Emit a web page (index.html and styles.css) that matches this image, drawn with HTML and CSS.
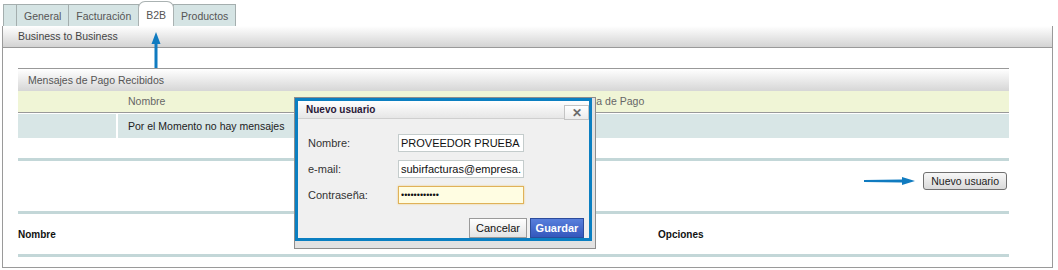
FILE: index.html
```html
<!DOCTYPE html>
<html lang="es">
  <head>
    <meta charset="UTF-8" />
    <meta name="viewport" content="width=device-width, initial-scale=1.0" />
    <title>B2B - Usuarios</title>
    <link rel="stylesheet" href="styles.css">
  </head>
  <body>
    <div class="page">
      <ul class="tabs">
        <li class="tab tab-stub"></li>
        <li class="tab">General</li>
        <li class="tab">Facturación</li>
        <li class="tab active">B2B</li>
        <li class="tab">Productos</li>
      </ul>

      <div class="frame">
        <div class="bar">Business to Business</div>

        <div class="content">
          <div class="section-title">Mensajes de Pago Recibidos</div>
          <div class="msg-head">
            <span></span>
            <span class="cell">Nombre</span>
            <span class="cell">Fecha de Pago</span>
          </div>
          <div class="msg-row">
            <span class="cell"></span>
            <span class="cell cell-wide">Por el Momento no hay mensajes</span>
          </div>

          <div class="rule"></div>
          <div class="actions">
            <button class="btn-native">Nuevo usuario</button>
          </div>
          <div class="rule"></div>
          <div class="list-head">
            <span>Nombre</span>
            <span>Opciones</span>
          </div>
          <div class="rule"></div>
        </div>
      </div>

      <!-- callout arrows -->
      <svg class="arrow arrow-up" width="12" height="40" viewBox="0 0 12 40">
        <path d="M6 2 L10.5 14 L7.5 14 L7.5 38 L4.5 38 L4.5 14 L1.5 14 Z" fill="#107bc0" />
      </svg>
      <svg class="arrow arrow-right" width="56" height="14" viewBox="0 0 56 14">
        <path d="M2 6 L40 5.5 L40 3 L53 7 L40 11 L40 8.5 L2 8 Z" fill="#107bc0" />
      </svg>

      <!-- modal -->
      <div class="dialog">
        <div class="dialog-box">
          <div class="dialog-title">
            Nuevo usuario
            <button class="dialog-close">&#x2715;</button>
          </div>
          <form class="dialog-form">
            <label for="nombre">Nombre:</label>
            <input id="nombre" type="text" value="PROVEEDOR PRUEBA">
            <label for="email">e-mail:</label>
            <input id="email" type="text" value="subirfacturas@empresa.com">
            <label for="clave">Contraseña:</label>
            <input id="clave" class="focused" type="password" value="123456789012">
          </form>
          <div class="dialog-actions">
            <button class="btn-cancel">Cancelar</button>
            <button class="btn-save">Guardar</button>
          </div>
        </div>
      </div>
    </div>
  </body>
</html>
```

FILE: styles.css
```css
body {
  margin: 0;
  font-family: "Liberation Sans", Arial, sans-serif;
  font-size: 10.5px;
  color: #444;
  background: #fff;
}

.page {
  position: relative;
  width: 1058px;
  height: 270px;
  overflow: hidden;
}

/* Tabs */
.tabs {
  display: flex;
  align-items: flex-end;
  height: 26px;
  margin: 0;
  padding: 0 0 0 3px;
  list-style: none;
}

.tab {
  height: 21px;
  line-height: 22px;
  padding: 0 7px;
  margin-right: -1px;
  border: 1px solid #a4aeae;
  border-bottom: 0;
  background-color: #d5e4e4;
  color: #555;
}

.tab-stub {
  width: 12px;
  padding: 0;
}

.tab.active {
  position: relative;
  z-index: 1;
  height: 24px;
  line-height: 27px;
  border-color: #aab2b2;
  border-radius: 7px 7px 0 0;
  background-color: #fff;
}

/* Main frame */
.frame {
  width: 1049px;
  margin-left: 2px;
  border: 1px solid #9a9a9a;
  border-top: 0;
}

.bar {
  height: 21px;
  line-height: 21px;
  padding-left: 15px;
  background-image: linear-gradient(#fff, #d3d3d3);
  border-bottom: 1px solid #999;
  color: #444;
}

.content {
  padding: 20px 43px 10px 15px;
}

.section-title {
  height: 22px;
  line-height: 22px;
  padding-left: 10px;
  border-top: 1px solid #999;
  background-image: linear-gradient(#fff, #d6d6d6);
  color: #555;
}

.msg-head,
.msg-row {
  display: grid;
  grid-template-columns: 98px 443px 1fr;
  column-gap: 2px;
}

.msg-head {
  height: 21px;
  line-height: 21px;
  background-color: #f0f5d6;
  border-bottom: 1px solid #999;
  color: #666;
}

.msg-row {
  height: 24px;
  line-height: 24px;
  margin-top: 1px;
  color: #222;
}

.cell {
  padding-left: 10px;
}

.msg-row .cell {
  background-color: #d8e6e6;
}

.cell-wide {
  grid-column: 2 / 4;
}

.rule {
  height: 3px;
  background-color: #c3d7d8;
}

.msg-row + .rule {
  margin-top: 20px;
}

.actions {
  display: flex;
  justify-content: flex-end;
  padding: 11px 2px 21px 0;
}

.btn-native {
  height: 18px;
  padding: 0 7px;
  font-family: inherit;
  font-size: 10.5px;
  color: #222;
  border: 1px solid #707070;
  border-radius: 3px;
  background-image: linear-gradient(#f7f7f7, #dadada);
}

.list-head {
  display: grid;
  grid-template-columns: 640px 1fr;
  align-items: center;
  height: 40px;
  font-size: 10px;
  font-weight: bold;
  color: #111;
}

/* Arrows */
.arrow {
  position: absolute;
}

.arrow-up {
  left: 150px;
  top: 30px;
}

.arrow-right {
  left: 862px;
  top: 174px;
}

/* Dialog */
.dialog {
  position: absolute;
  left: 294px;
  top: 97px;
  width: 300px;
  height: 150px;
  border: 1px solid #8d8d8d;
  background-color: #e2e2e2;
}

.dialog-box {
  width: 291px;
  border: 3px solid #0b7fc1;
  background-color: #f0f0f0;
}

.dialog-title {
  position: relative;
  height: 17px;
  line-height: 17px;
  padding-left: 8px;
  border-bottom: 1px solid #cfcfcf;
  background-image: linear-gradient(#fff, #e6e6e6);
  font-size: 10px;
  font-weight: bold;
  color: #2a1838;
}

.dialog-close {
  position: absolute;
  right: 0;
  top: 4px;
  width: 25px;
  height: 15px;
  padding: 0;
  line-height: 12px;
  font-size: 12px;
  font-weight: bold;
  color: #6a6a6a;
  border: 1px solid #c4c4c4;
  background-image: linear-gradient(#fff, #ececec);
}

.dialog-form {
  display: grid;
  grid-template-columns: 90px 126px;
  row-gap: 8px;
  align-items: center;
  margin: 0;
  padding: 15px 5px 0 10px;
  font-size: 11px;
  color: #333;
}

.dialog-form input {
  box-sizing: border-box;
  height: 18px;
  padding: 0 2px;
  font-family: inherit;
  font-size: 11px;
  color: #111;
  border: 1px solid #c4cccc;
  background-color: #fff;
  outline: none;
}

.dialog-form input.focused {
  border-color: #e0b258;
  background-color: #fffde2;
  box-shadow: 0 0 2px #eccb85;
  font-size: 9px;
}

.dialog-actions {
  display: flex;
  justify-content: flex-end;
  gap: 3px;
  margin-top: 14px;
  padding-right: 5px;
}

.btn-cancel,
.btn-save {
  height: 20px;
  padding: 0;
  font-family: inherit;
  font-size: 11px;
}

.btn-cancel {
  width: 58px;
  color: #111;
  border: 1px solid #9a9a9a;
  background-image: linear-gradient(#fff, #e4e4e4);
}

.btn-save {
  width: 54px;
  font-weight: bold;
  color: #fff;
  border: 1px solid #2c4c9c;
  background-image: linear-gradient(#587fdc, #3458bd);
}
```
